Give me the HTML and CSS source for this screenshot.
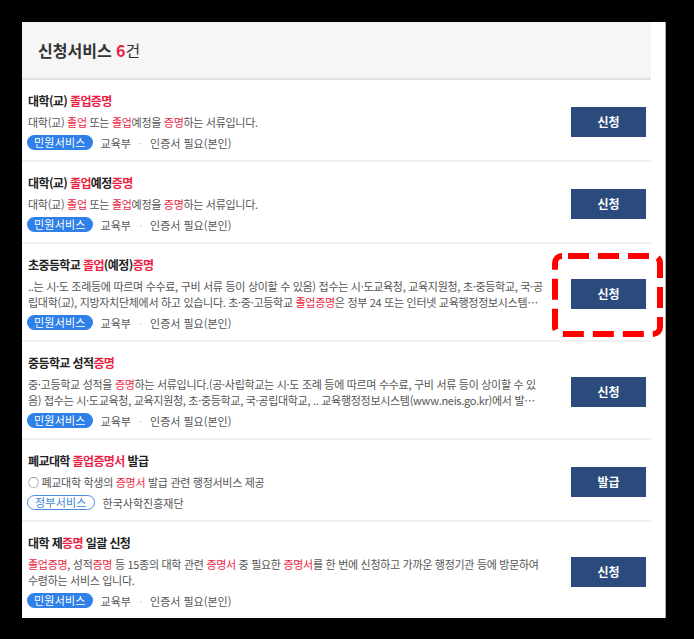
FILE: index.html
```html
<!DOCTYPE html>
<html lang="ko">
<head>
  <meta charset="UTF-8">
  <meta name="viewport" content="width=device-width, initial-scale=1.0">
  <title>신청서비스</title>

  <link rel="stylesheet" href="styles.css">
</head>
<body>
  <div id="panel">
    <div id="list_head">
      <h2>신청서비스 <em>6</em><span>건</span></h2>
    </div>
    <ul id="svc_list">
      <li class="svc">
        <div class="svc_info">
          <p class="svc_title">대학(교) <span class="hl">졸업증명</span></p>
          <p class="svc_desc">대학(교) <span class="hl">졸업</span> 또는 <span class="hl">졸업</span>예정을 <span class="hl">증명</span>하는 서류입니다.</p>
          <div class="svc_meta">
            <span class="tag">민원서비스</span>
            <span>교육부</span><span class="dot">·</span><span>인증서 필요(본인)</span>
          </div>
        </div>
        <div class="svc_btn"><button>신청</button></div>
      </li>
      <li class="svc">
        <div class="svc_info">
          <p class="svc_title">대학(교) <span class="hl">졸업</span>예정<span class="hl">증명</span></p>
          <p class="svc_desc">대학(교) <span class="hl">졸업</span> 또는 <span class="hl">졸업</span>예정을 <span class="hl">증명</span>하는 서류입니다.</p>
          <div class="svc_meta">
            <span class="tag">민원서비스</span>
            <span>교육부</span><span class="dot">·</span><span>인증서 필요(본인)</span>
          </div>
        </div>
        <div class="svc_btn"><button>신청</button></div>
      </li>
      <li class="svc">
        <div class="svc_info">
          <p class="svc_title">초중등학교 <span class="hl">졸업</span>(예정)<span class="hl">증명</span></p>
          <p class="svc_desc">..는 시·도 조례등에 따르며 수수료, 구비 서류 등이 상이할 수 있음) 접수는 시·도교육청, 교육지원청, 초·중등학교, 국·공립대학(교), 지방자치단체에서 하고 있습니다. 초·중·고등학교 <span class="hl">졸업증명</span>은 정부 24 또는 인터넷 교육행정정보시스템(www.neis.go.kr)에서 발급 가능합니다.</p>
          <div class="svc_meta">
            <span class="tag">민원서비스</span>
            <span>교육부</span><span class="dot">·</span><span>인증서 필요(본인)</span>
          </div>
        </div>
        <div class="svc_btn marked">
          <button>신청</button>
          <svg class="mark" width="111" height="84" viewBox="0 0 111 84">
            <rect x="3" y="3" width="105" height="78" rx="7" fill="none" stroke="#ff0000" stroke-width="6" stroke-dasharray="21 9" stroke-dashoffset="-6"/>
          </svg>
        </div>
      </li>
      <li class="svc">
        <div class="svc_info">
          <p class="svc_title">중등학교 성적<span class="hl">증명</span></p>
          <p class="svc_desc">중·고등학교 성적을 <span class="hl">증명</span>하는 서류입니다.(공·사립학교는 시·도 조례 등에 따르며 수수료, 구비 서류 등이 상이할 수 있음) 접수는 시·도교육청, 교육지원청, 초·중등학교, 국·공립대학교, .. 교육행정정보시스템(www.neis.go.kr)에서 발급하며, ...</p>
          <div class="svc_meta">
            <span class="tag">민원서비스</span>
            <span>교육부</span><span class="dot">·</span><span>인증서 필요(본인)</span>
          </div>
        </div>
        <div class="svc_btn"><button>신청</button></div>
      </li>
      <li class="svc">
        <div class="svc_info">
          <p class="svc_title">폐교대학 <span class="hl">졸업증명서</span> 발급</p>
          <p class="svc_desc">○ 폐교대학 학생의 <span class="hl">증명서</span> 발급 관련 행정서비스 제공</p>
          <div class="svc_meta">
            <span class="tag tag_line">정부서비스</span>
            <span>한국사학진흥재단</span>
          </div>
        </div>
        <div class="svc_btn"><button>발급</button></div>
      </li>
      <li class="svc">
        <div class="svc_info">
          <p class="svc_title">대학 제<span class="hl">증명</span> 일괄 신청</p>
          <p class="svc_desc"><span class="hl">졸업증명</span>, 성적<span class="hl">증명</span> 등 15종의 대학 관련 <span class="hl">증명서</span> 중 필요한 <span class="hl">증명서</span>를 한 번에 신청하고 가까운 행정기관 등에 방문하여 수령하는 서비스 입니다.</p>
          <div class="svc_meta">
            <span class="tag">민원서비스</span>
            <span>교육부</span><span class="dot">·</span><span>인증서 필요(본인)</span>
          </div>
        </div>
        <div class="svc_btn"><button>신청</button></div>
      </li>
    </ul>
  </div>
</body>
</html>
```

FILE: styles.css
```css
body{
  margin: 0;
  background-color: #000;
  font-family: "Noto Sans CJK KR", "Noto Sans", sans-serif;
  color: #222;
}

#panel{
  margin: 22px 0 0 22px;
  width: 643px;
  height: 596px;
  background-color: #fff;
  border-right: 1px solid #a8a8a8;
  overflow: hidden;
}

#list_head{
  width: 629px;
  height: 58px;
  box-sizing: border-box;
  padding: 0 16px;
  display: flex;
  align-items: center;
  background-color: #f6f6f6;
  border-bottom: 2px solid #e2e2e2;
}

#list_head h2{
  margin: 0;
  font-size: 16px;
  font-weight: bold;
  letter-spacing: 0;
  color: #333;
}

#list_head em{
  font-style: normal;
  color: #ee1f44;
}

#list_head span{
  font-weight: normal;
}

#svc_list{
  list-style: none;
  margin: 0;
  padding: 0;
  width: 629px;
}

.svc{
  display: flex;
  align-items: center;
  padding: 12px 5px 9px 6px;
  border-bottom: 2px solid #f1f1f1;
}

.svc_info{
  width: 516px;
  margin-right: 27px;
}

.svc_title{
  margin: 0;
  font-size: 12px;
  line-height: 18px;
  font-weight: bold;
  letter-spacing: -0.6px;
  color: #222;
}

.svc_desc{
  margin: 4px 0 0;
  font-size: 11px;
  line-height: 16px;
  letter-spacing: -0.3px;
  color: #555;
  display: -webkit-box;
  -webkit-line-clamp: 2;
  -webkit-box-orient: vertical;
  overflow: hidden;
}

.hl{
  color: #ee1f44;
}

.svc_meta{
  margin-top: 4px;
  height: 17px;
  display: flex;
  align-items: center;
  font-size: 11px;
  letter-spacing: 0;
  color: #555;
}

.tag{
  height: 15px;
  line-height: 15px;
  padding: 0 7px;
  margin: 0 8px 0 -1px;
  border-radius: 8px;
  background-color: #2f80e8;
  color: #fff;
  letter-spacing: 0.2px;
}

.tag_line{
  height: 13px;
  line-height: 13px;
  border: 1px solid #4b8ae0;
  background-color: #fff;
  color: #3f7fd8;
}

.dot{
  margin: 0 8px;
  color: #c4c4c4;
}

.svc_btn{
  position: relative;
  width: 75px;
  height: 30px;
}

.svc_btn button{
  width: 75px;
  height: 30px;
  border: none;
  background-color: #2b4b7d;
  color: #fff;
  font-family: inherit;
  font-size: 12px;
  font-weight: bold;
  cursor: pointer;
}

.mark{
  position: absolute;
  left: -19px;
  top: -26px;
}
```
